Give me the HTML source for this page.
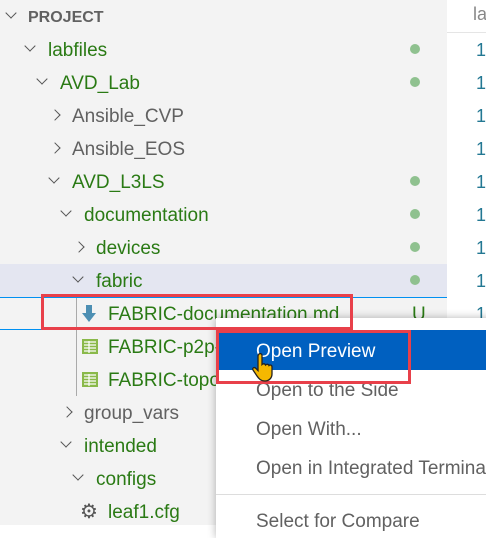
<!DOCTYPE html>
<html><head><style>
body{margin:0;width:486px;height:525px;overflow:hidden;background:#fff;font-family:"Segoe UI","Liberation Sans",sans-serif;position:relative}
#side{position:absolute;left:0;top:0;width:447px;height:525px;background:#f3f3f3}
.r{position:absolute;left:0;width:447px;height:33px;line-height:35px;font-size:19px;color:#2a7a14;white-space:nowrap}
.r .t{position:absolute}
.g{color:#616161}
.ch{position:absolute;top:12px;width:7px;height:7px;border-right:1.3px solid #555;border-bottom:1.3px solid #555}
.dn{transform:rotate(45deg);top:9px}
.rt{transform:rotate(-45deg);top:12px}
.dot{position:absolute;left:410px;top:11px;width:10px;height:10px;border-radius:50%;background:#8fc18f}
.ln{position:absolute;left:476px;font-size:18px;color:#237893;height:33px;line-height:35px}
#menu{position:absolute;left:216px;top:318px;width:280px;height:220px;background:#fff;box-shadow:0 0 8px rgba(0,0,0,.3)}
.mi{position:absolute;left:40px;font-size:19px;color:#616161;white-space:nowrap}
.red{position:absolute;border:3px solid #e8404a;box-sizing:border-box}
</style></head><body>
<div id="side">
<div class="r" style="top:0;height:34px"><span class="ch dn" style="left:7px"></span><span class="t g" style="left:28px;font-weight:bold;font-size:16px">PROJECT</span></div>
<div class="r" style="top:33px"><span class="ch dn" style="left:26px"></span><span class="t" style="left:48px">labfiles</span><span class="dot"></span></div>
<div class="r" style="top:66px"><span class="ch dn" style="left:38px"></span><span class="t" style="left:60px">AVD_Lab</span><span class="dot"></span></div>
<div class="r" style="top:99px"><span class="ch rt" style="left:51px"></span><span class="t g" style="left:72px">Ansible_CVP</span></div>
<div class="r" style="top:132px"><span class="ch rt" style="left:51px"></span><span class="t g" style="left:72px">Ansible_EOS</span></div>
<div class="r" style="top:165px"><span class="ch dn" style="left:50px"></span><span class="t" style="left:72px">AVD_L3LS</span><span class="dot"></span></div>
<div class="r" style="top:198px"><span class="ch dn" style="left:62px"></span><span class="t" style="left:84px">documentation</span><span class="dot"></span></div>
<div class="r" style="top:231px"><span class="ch rt" style="left:75px"></span><span class="t" style="left:96px">devices</span><span class="dot"></span></div>
<div class="r" style="top:264px;background:#e4e6f1"><span class="ch dn" style="left:74px"></span><span class="t" style="left:96px">fabric</span><span class="dot"></span></div>
<div class="r" style="top:297px;border-top:1px solid #0090f1;border-bottom:1px solid #0090f1;height:31px;line-height:33px"><svg style="position:absolute;left:82px;top:7px" width="14" height="17" viewBox="0 0 14 17"><path d="M4 0h6v8h4l-7 9-7-9h4z" fill="#4d8fb3"/></svg><span class="t" style="left:108px">FABRIC-documentation.md</span><span class="t" style="left:412px">U</span></div>
<div style="position:absolute;left:76px;top:298px;width:1px;height:98px;background:#aaa"></div>
<div class="r" style="top:330px"><svg style="position:absolute;left:82px;top:9px" width="16" height="15"><rect width="16" height="15" fill="#8ab94a"/><path d="M2 3h12M2 6h12M2 9h12M2 12h12M7 2v12" stroke="#fff" stroke-width="1.2"/></svg><span class="t" style="left:108px">FABRIC-p2p-</span></div>
<div class="r" style="top:363px"><svg style="position:absolute;left:82px;top:9px" width="16" height="15"><rect width="16" height="15" fill="#8ab94a"/><path d="M2 3h12M2 6h12M2 9h12M2 12h12M7 2v12" stroke="#fff" stroke-width="1.2"/></svg><span class="t" style="left:108px">FABRIC-topo</span></div>
<div class="r" style="top:396px"><span class="ch rt" style="left:63px"></span><span class="t g" style="left:84px">group_vars</span></div>
<div class="r" style="top:429px"><span class="ch dn" style="left:62px"></span><span class="t" style="left:84px">intended</span></div>
<div class="r" style="top:462px"><span class="ch dn" style="left:74px"></span><span class="t" style="left:96px">configs</span></div>
<div class="r" style="top:495px"><span class="t" style="left:80px;color:#555;font-size:20px">⚙</span><span class="t" style="left:108px">leaf1.cfg</span></div>
</div>
<div style="position:absolute;left:473px;top:4px;font-size:18px;color:#888">la</div>
<div style="position:absolute;left:447px;top:32px;width:39px;height:1px;background:#e5e5e5"></div>
<div class="ln" style="top:33px">1</div><div class="ln" style="top:66px">1</div><div class="ln" style="top:99px">1</div><div class="ln" style="top:132px">1</div><div class="ln" style="top:165px">1</div><div class="ln" style="top:198px">1</div><div class="ln" style="top:231px">1</div><div class="ln" style="top:264px">1</div><div class="ln" style="top:297px">1</div>
<div id="menu">
<div style="position:absolute;left:0;top:12px;width:280px;height:40px;background:#0060c0"></div>
<div class="mi" style="top:23px;color:#fff">Open Preview</div>
<div class="mi" style="top:62px">Open to the Side</div>
<div class="mi" style="top:101px">Open With...</div>
<div class="mi" style="top:140px">Open in Integrated Terminal</div>
<div style="position:absolute;left:0;top:176px;width:280px;height:1px;background:#ddd"></div>
<div class="mi" style="top:193px">Select for Compare</div>
</div>
<div class="red" style="left:41px;top:294px;width:312px;height:36px"></div>
<div class="red" style="left:216px;top:330px;width:195px;height:54px"></div>
<svg style="position:absolute;left:252px;top:352px" width="26" height="30" viewBox="0 0 26 30"><path d="M7 2c1.5-1 3 0 3 1.5v9c1-1 3-1 3.5.5 1-1 3-1 3.5.5 1-1 3-.5 3 1.5v7c0 4-3 7-7 7s-6-2-8-5l-4-6c-1-2 1-3 2.5-2l2.5 2.5V3.5z" fill="#f5b800" stroke="#222" stroke-width="1.3"/></svg>
</body></html>
